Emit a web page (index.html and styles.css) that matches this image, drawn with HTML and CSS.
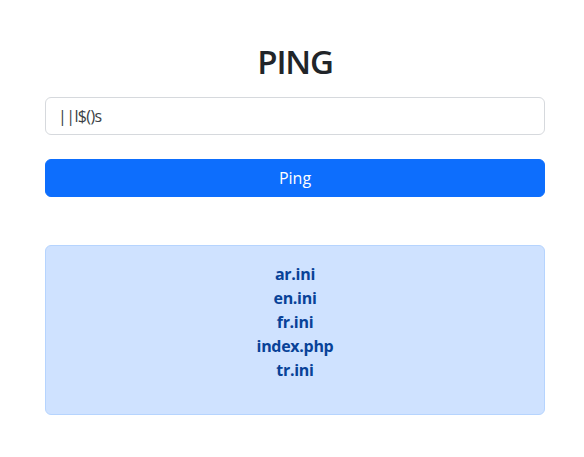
FILE: index.html
```html
<!DOCTYPE html>
<html lang="en">
<head>
<meta charset="utf-8">
<title>PING</title>
<link rel="stylesheet" href="styles.css">
</head>
<body>
<main class="page">
  <h1 class="title">PING</h1>
  <form class="ping-form">
    <input class="field" type="text" name="host" value="||l$()s">
    <button class="btn" type="button">Ping</button>
  </form>
  <div class="alert">
    <p class="result">ar.ini<br>en.ini<br>fr.ini<br>index.php<br>tr.ini</p>
  </div>
</main>
</body>
</html>
```
FILE: styles.css
```css
html, body {
  margin: 0;
  padding: 0;
  background: #fff;
}
body {
  font-family: "Open Sans", "Noto Sans", "Liberation Sans", sans-serif;
  font-size: 16px;
  color: #212529;
}
.page {
  padding: 42px 39px 0 45px;
}
.title {
  margin: 0 0 15px;
  font-size: 33px;
  line-height: 40px;
  font-weight: 600;
  letter-spacing: -1.2px;
  text-align: center;
  color: #212529;
}
.ping-form {
  display: flex;
  flex-direction: column;
  gap: 24px;
}
.field {
  box-sizing: border-box;
  height: 38px;
  width: 100%;
  padding: 0 12px;
  border: 1px solid #d6d9dd;
  border-radius: 6px;
  font-family: inherit;
  font-size: 16px;
  letter-spacing: -0.6px;
  color: #3a3f44;
  background: #fff;
  outline: none;
}
.btn {
  box-sizing: border-box;
  height: 38px;
  width: 100%;
  border: 1px solid #0d6efd;
  border-radius: 6px;
  background: #0d6efd;
  color: #fff;
  font-family: inherit;
  font-size: 16px;
  cursor: pointer;
}
.alert {
  margin-top: 48px;
  padding: 16px;
  border: 1px solid #b6d4fe;
  border-radius: 6px;
  background: #cfe2ff;
  color: #084298;
  text-align: center;
}
.result {
  margin: 0 0 16px;
  font-weight: 700;
  line-height: 24px;
  letter-spacing: -0.3px;
}
```
